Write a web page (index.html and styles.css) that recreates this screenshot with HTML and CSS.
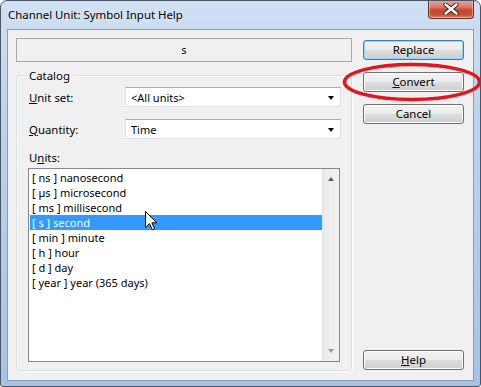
FILE: index.html
```html
<!DOCTYPE html>
<html>
<head>
<meta charset="utf-8">
<link rel="stylesheet" href="styles.css">
</head>
<body>
<div class="window">
  <div class="titlebar">
    <span class="title">Channel Unit: Symbol Input Help</span>
    <div class="close">
      <svg width="16" height="12" viewBox="0 0 16 12">
        <path d="M2.5 1.5 L13.5 10.5 M13.5 1.5 L2.5 10.5" stroke="#3a1410" stroke-width="4.2" stroke-linecap="round"/>
        <path d="M2.5 1.5 L13.5 10.5 M13.5 1.5 L2.5 10.5" stroke="#ffffff" stroke-width="2.4" stroke-linecap="round"/>
      </svg>
    </div>
  </div>
  <div class="client">
    <div class="left">
      <div class="symbol">s</div>
      <fieldset class="group">
        <legend class="group-title">Catalog</legend>
        <div class="field-row">
          <span class="field-label"><u>U</u>nit set:</span>
          <div class="combo"><span>&lt;All units&gt;</span><span class="combo-arrow"></span></div>
        </div>
        <div class="field-row">
          <span class="field-label"><u>Q</u>uantity:</span>
          <div class="combo"><span>Time</span><span class="combo-arrow"></span></div>
        </div>
        <div class="units-label">U<u>n</u>its:</div>
        <div class="listbox">
          <div class="list-items">
            <div class="item">[ ns ] nanosecond</div>
            <div class="item">[ µs ] microsecond</div>
            <div class="item">[ ms ] millisecond</div>
            <div class="item selected">[ s ] second</div>
            <div class="item">[ min ] minute</div>
            <div class="item">[ h ] hour</div>
            <div class="item">[ d ] day</div>
            <div class="item">[ year ] year (365 days)</div>
          </div>
          <div class="scrollbar">
            <span class="arrow-up"></span>
            <span class="arrow-down"></span>
          </div>
        </div>
      </fieldset>
    </div>
    <div class="right">
      <div class="btn default">Replace</div>
      <div class="btn"><u>C</u>onvert</div>
      <div class="btn">Cancel</div>
      <div class="btn help"><u>H</u>elp</div>
    </div>
  </div>
  <svg class="highlight" width="150" height="46" viewBox="0 0 150 46">
    <ellipse cx="72" cy="22" rx="67.5" ry="17.5" fill="none" stroke="#e3141b" stroke-width="3.6"/>
  </svg>
  <svg class="cursor" width="13" height="20" viewBox="0 0 13 20">
    <polygon points="0.5,0.5 0.5,16.5 4.5,12.7 7.3,18.8 9.6,17.8 6.9,11.8 11.8,11.8" fill="#ffffff" stroke="#000000" stroke-width="1" stroke-linejoin="miter"/>
  </svg>
</div>
</body>
</html>
```
FILE: styles.css
```css
html, body {
  margin: 0;
  padding: 0;
  background: #ffffff;
}

.window {
  position: relative;
  width: 481px;
  height: 387px;
  box-sizing: border-box;
  border: 1px solid #4a5666;
  border-radius: 7px 7px 3px 3px;
  background: linear-gradient(180deg, #cfe0f2 0%, #bfd5ee 25%, #a6c3e6 100%);
  display: flex;
  flex-direction: column;
  padding: 0 6px 5px 6px;
  font-family: "Segoe UI", "Noto Sans", "Open Sans", sans-serif;
  font-size: 11px;
  color: #000;
  overflow: hidden;
}

.titlebar {
  height: 28px;
  display: flex;
  align-items: flex-start;
  justify-content: space-between;
}

.title {
  margin-top: 6px;
  margin-left: 1px;
  font-size: 11.4px;
  line-height: 16px;
  color: #000;
  text-shadow: 0 0 6px rgba(255,255,255,0.9);
}

.close {
  width: 46px;
  height: 19px;
  margin-top: -1px;
  box-sizing: border-box;
  border: 1px solid #6b2a22;
  border-top: none;
  border-radius: 0 0 4px 4px;
  background: linear-gradient(180deg, #e9a99a 0%, #d77a6b 40%, #c24a37 55%, #c1502f 80%, #d7826c 100%);
  box-shadow: inset 0 0 0 1px rgba(255,220,210,0.5);
  display: flex;
  align-items: center;
  justify-content: center;
}

.client {
  flex: 1;
  background: #f0f0f0;
  border: 1px solid #8b9db3;
  display: flex;
  padding: 8px 8px 9px 8px;
  gap: 11px;
}

.left {
  width: 336px;
  display: flex;
  flex-direction: column;
}

.symbol {
  height: 24px;
  box-sizing: border-box;
  border: 1px solid #a8a8a8;
  background: #f0f0f0;
  display: flex;
  align-items: center;
  justify-content: center;
  padding-bottom: 1px;
}

.group {
  margin: 6px 0 0 0;
  padding: 4px 11px 7px 11px;
  border: 1px solid #d5dfe5;
  border-radius: 3px;
  box-shadow: inset 1px 1px 0 #ffffff, 1px 1px 0 #ffffff;
  flex: 1;
  display: flex;
  flex-direction: column;
  min-width: 0;
}

.group-title {
  padding: 0 3px 0 2px;
  margin-left: -1px;
  line-height: 15px;
  font-size: 11.4px;
}

.field-row {
  display: flex;
  align-items: center;
  height: 20px;
  margin-bottom: 12px;
}

.field-label {
  width: 96px;
  padding-left: 1px;
  font-size: 11.4px;
}

.combo {
  flex: 1;
  height: 20px;
  box-sizing: border-box;
  border: 1px solid #dbdfe6;
  border-top-color: #abadb3;
  background: #fff;
  display: flex;
  align-items: center;
  justify-content: space-between;
  padding: 0 6px 0 5px;
  margin-right: -1px;
}

.combo-arrow {
  width: 0;
  height: 0;
  border-left: 3.5px solid transparent;
  border-right: 3.5px solid transparent;
  border-top: 4px solid #000;
  margin-top: 1px;
}

.units-label {
  line-height: 15px;
  margin-top: -1px;
  padding-left: 1px;
  font-size: 11.4px;
}

.listbox {
  margin-top: 3px;
  height: 194px;
  box-sizing: border-box;
  border: 1px solid #828790;
  background: #fff;
  display: flex;
}

.list-items {
  flex: 1;
  padding-top: 1px;
  padding-left: 1px;
}

.item {
  height: 15px;
  line-height: 15px;
  padding-left: 2px;
  white-space: nowrap;
}

.item.selected {
  background: #3399ff;
  color: #fff;
}

.scrollbar {
  width: 17px;
  background: linear-gradient(90deg, #e3e3e3 0%, #ececec 20%, #f2f2f2 100%);
  display: flex;
  flex-direction: column;
  justify-content: space-between;
  align-items: center;
  padding: 8px 0 8px 0;
}

.arrow-up {
  width: 0;
  height: 0;
  border-left: 3.5px solid transparent;
  border-right: 3.5px solid transparent;
  border-bottom: 4px solid #5a5a5a;
}

.arrow-down {
  width: 0;
  height: 0;
  border-left: 3.5px solid transparent;
  border-right: 3.5px solid transparent;
  border-top: 4px solid #9a9a9a;
}

.right {
  width: 101px;
  display: flex;
  flex-direction: column;
  gap: 12px;
  padding-top: 2px;
  padding-bottom: 1px;
}

.btn {
  height: 20px;
  box-sizing: border-box;
  border: 1px solid #707070;
  border-radius: 3px;
  background: linear-gradient(180deg, #f2f2f2 0%, #ebebeb 48%, #dddddd 52%, #cfcfcf 100%);
  box-shadow: inset 0 0 0 1px #fbfbfb;
  display: flex;
  align-items: center;
  justify-content: center;
  line-height: 16px;
  font-size: 11.4px;
}

.btn.default {
  border-color: #3c7fb1;
  box-shadow: inset 0 0 0 1px #8fd6f7;
}

.btn.help {
  margin-top: auto;
}

.highlight {
  position: absolute;
  left: 339px;
  top: 59px;
}

.cursor {
  position: absolute;
  left: 144px;
  top: 210px;
}
```
